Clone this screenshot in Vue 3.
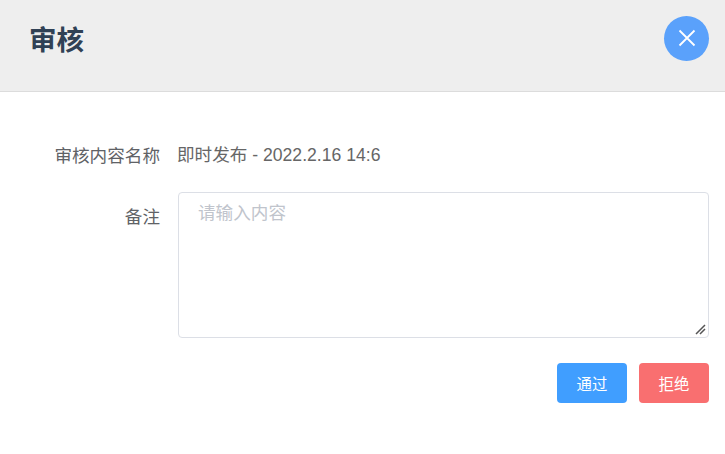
<script setup>
import { ref } from 'vue';

const remark = ref('');
</script>

<template>
  <div class="dialog">
    <header class="head">
      <h2 class="title">审核</h2>
      <button class="close" type="button">
        <svg width="18" height="18" viewBox="0 0 18 18">
          <path d="M1.5 1.5 L16.5 16.5 M16.5 1.5 L1.5 16.5" stroke="#fff" stroke-width="1.8" fill="none" />
        </svg>
      </button>
    </header>

    <section class="body">
      <div class="row row-info">
        <label class="label">审核内容名称</label>
        <div class="value">即时发布 - 2022.2.16 14:6</div>
      </div>
      <div class="row row-remark">
        <label class="label label-top">备注</label>
        <div class="input-wrap">
          <textarea v-model="remark" class="input" placeholder="请输入内容"></textarea>
          <svg class="grip" width="12" height="12" viewBox="0 0 12 12">
            <path d="M2 11 L11 2 M6 11 L11 6" stroke="#555" stroke-width="1.5" fill="none" />
          </svg>
        </div>
      </div>
      <div class="actions">
        <button class="btn pass" type="button">通过</button>
        <button class="btn reject" type="button">拒绝</button>
      </div>
    </section>
  </div>
</template>

<style scoped>
.dialog {
  width: 725px;
  height: 454px;
  background: #fff;
  font-family: "Liberation Sans", "Noto Sans CJK SC", sans-serif;
}

.head {
  display: flex;
  justify-content: space-between;
  align-items: flex-start;
  box-sizing: border-box;
  height: 92px;
  padding: 16px 16px 0 29px;
  background: #eee;
  border-bottom: 1px solid #dcdcdc;
}

.title {
  margin: 7px 0 0;
  font-size: 27.5px;
  line-height: 36px;
  font-weight: 700;
  color: #304155;
}

.close {
  display: flex;
  align-items: center;
  justify-content: center;
  width: 45px;
  height: 45px;
  padding: 0 0 1px;
  border: none;
  border-radius: 50%;
  background: #5aa1fb;
  cursor: pointer;
}

.body {
  padding: 40px 16px 0 0;
}

.row {
  display: flex;
}

.row-info {
  align-items: center;
  height: 46px;
  padding-bottom: 2px;
  box-sizing: border-box;
}

.row-remark {
  margin-top: 14px;
}

.label {
  flex: none;
  width: 160px;
  margin-right: 18px;
  text-align: right;
  font-size: 17.6px;
  color: #606266;
}

.label-top {
  line-height: 50px;
}

.value {
  margin: -2px 0 0 -1px;
  font-size: 17.6px;
  color: #666;
}

.input-wrap {
  position: relative;
  flex: 1;
  height: 146px;
}

.input {
  display: block;
  box-sizing: border-box;
  width: 100%;
  height: 100%;
  padding: 7px 19px;
  border: 1px solid #dcdfe6;
  border-radius: 4px;
  outline: none;
  resize: none;
  font-family: inherit;
  font-size: 17.6px;
  line-height: 26px;
  color: #606266;
}

.input::placeholder {
  color: #c0c4cc;
}

.grip {
  position: absolute;
  right: 3px;
  bottom: 3px;
  pointer-events: none;
}

.actions {
  display: flex;
  justify-content: flex-end;
  gap: 12px;
  margin-top: 25px;
}

.btn {
  width: 70px;
  height: 40px;
  padding: 0;
  border: none;
  border-radius: 4px;
  font-family: inherit;
  font-size: 15.4px;
  color: #fff;
  cursor: pointer;
}

.pass {
  background: #409eff;
}

.reject {
  background: #f96f70;
}
</style>

<style>
html, body {
  margin: 0;
  background: #fff;
}
</style>
